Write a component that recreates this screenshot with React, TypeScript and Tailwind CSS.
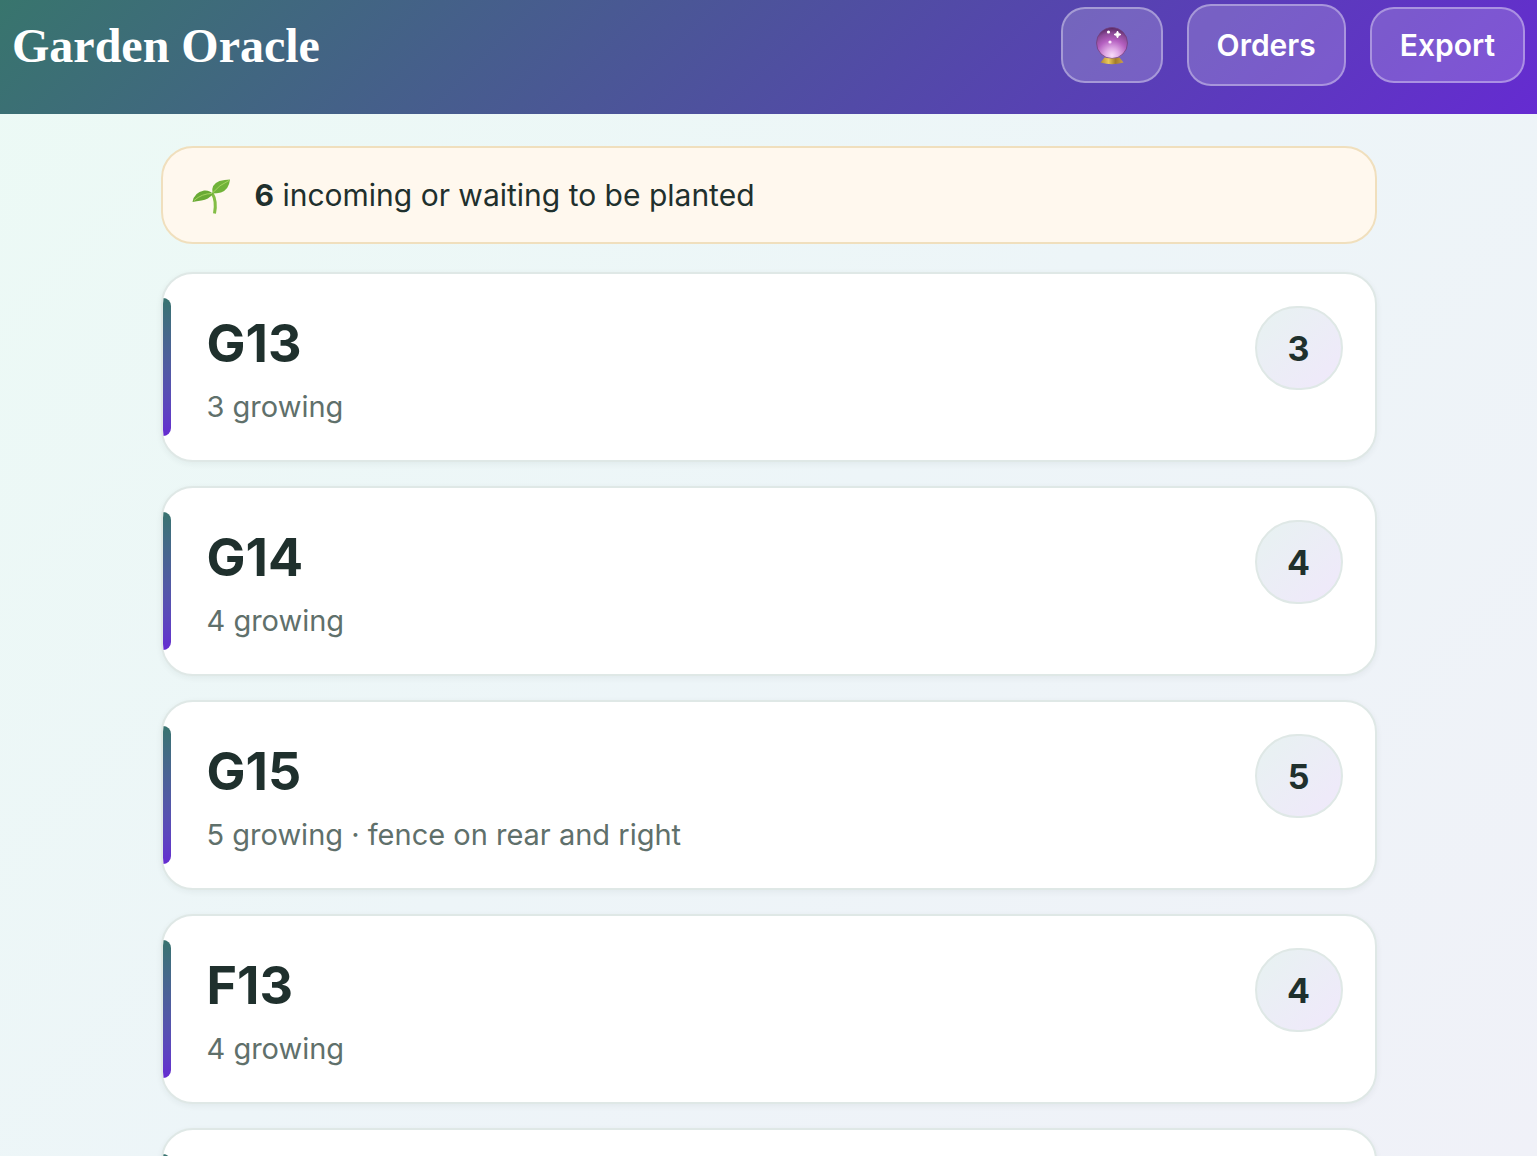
import React from 'react';

interface Bed {
  id: string;
  count: number;
  note?: string;
}

const beds: Bed[] = [
  { id: 'G13', count: 3 },
  { id: 'G14', count: 4 },
  { id: 'G15', count: 5, note: 'fence on rear and right' },
  { id: 'F13', count: 4 },
];

const navButton =
  'flex items-center justify-center rounded-3xl border-2 border-white/35 bg-white/18 text-[30px] leading-9 font-semibold text-white';

const CrystalBall: React.FC = () => (
  <svg viewBox="0 0 40 40" className="size-10" aria-hidden="true">
    <defs>
      <radialGradient id="ball" cx="0.5" cy="0.9" r="0.9">
        <stop offset="0" stopColor="#f8dcf8" />
        <stop offset="0.25" stopColor="#e0aae6" />
        <stop offset="0.55" stopColor="#b45fc0" />
        <stop offset="0.8" stopColor="#8c4a98" />
        <stop offset="1" stopColor="#552560" />
      </radialGradient>
      <linearGradient id="stand" x1="0" x2="1" y1="0" y2="0">
        <stop offset="0" stopColor="#b08a35" />
        <stop offset="0.35" stopColor="#ecc95c" />
        <stop offset="0.65" stopColor="#a37c2a" />
        <stop offset="1" stopColor="#cfa24a" />
      </linearGradient>
    </defs>
    <circle cx="20" cy="18" r="15.5" fill="url(#ball)" stroke="#71407f" strokeWidth="0.8" />
    <path d="M12.500 32.500q7.500 2 15 0l4 5q-11.500 3.500-23 0z" fill="url(#stand)" />
    <circle cx="16.5" cy="7" r="1.6" fill="#fff" />
    <circle cx="18" cy="17" r="1.6" fill="#fbe6fc" />
    <path d="M25.5 6l1 2.500 2.500 1-2.500 1-1 2.500-1-2.500-2.500-1 2.500-1z" fill="#fff" stroke="#fff" strokeWidth="1" />
  </svg>
);

const Seedling: React.FC = () => (
  <svg viewBox="0 0 40 40" className="size-10 shrink-0" aria-hidden="true">
    <path d="M21 18q5 8 2.500 20.500" fill="none" stroke="#83bd45" strokeWidth="3" />
    <path d="M22 19q-3-4-9-3.500Q3 17.500 1.500 27q4-1 9-1.500 7-1 11.500-6.500z" fill="#69aa35" />
    <path d="M21.500 18.500q-2-9 7-12.500 5-1.500 10.500-1.500Q38 14.500 30 17.500q-4 1-8.500 1z" fill="#71b339" />
    <path d="M3 25.500q8-7 18-7M22 17.500Q28 10 38 5.500" fill="none" stroke="#a4d45f" strokeWidth="1" />
  </svg>
);

const BedCard: React.FC<{ bed?: Bed }> = ({ bed }) => (
  <li className="relative flex min-h-[190px] shrink-0 items-start justify-between overflow-hidden rounded-[32px] border-2 border-[#dfe8e6] bg-white py-8 pr-8 pl-11 shadow-[0_2px_6px_rgba(31,48,45,0.06)]">
    {/* Accent stripe on the left edge */}
    <span className="absolute inset-y-6 left-0 w-2 rounded-r-lg bg-linear-to-b from-[#38736f] to-[#652bd1]" />
    {bed && (
      <>
        <div>
          <h2 className="mt-1 text-[52px] leading-[68px] font-bold">{bed.id}</h2>
          <p className="mt-2 text-[29px] leading-[42px] text-[#5f706b]">
            {bed.count} growing{bed.note && ` · ${bed.note}`}
          </p>
        </div>
        <span className="flex h-[84px] w-[88px] items-center justify-center rounded-[44px] border-2 border-[#dfe8e6] bg-[linear-gradient(135deg,#e7f2f1,#f0e8fb)] text-[34px] font-bold">
          {bed.count}
        </span>
      </>
    )}
  </li>
);

const App: React.FC = () => {
  return (
    <div className="flex h-screen flex-col overflow-hidden bg-[linear-gradient(135deg,#ecfaf5,#edf5f8_50%,#f0f1f8)] font-[Inter,sans-serif] text-[#1f302d]">
      <header className="flex shrink-0 items-start justify-between bg-[linear-gradient(135deg,#38756d,#652bd1)] px-3 pt-1 pb-7">
        <h1 className="pt-3 font-['Liberation_Serif',serif] text-[48px] leading-[60px] font-bold text-white">
          Garden Oracle
        </h1>
        <nav className="flex items-center gap-6">
          <button type="button" aria-label="Oracle" className={`${navButton} h-[76px] w-[102px]`}>
            <CrystalBall />
          </button>
          <a href="#orders" className={`${navButton} h-[82px] px-7`}>
            Orders
          </a>
          <button type="button" className={`${navButton} h-[76px] px-7`}>
            Export
          </button>
        </nav>
      </header>

      <main className="mx-auto flex min-h-0 w-full max-w-7xl flex-1 flex-col overflow-hidden px-8 pt-8">
        <div className="flex shrink-0 items-center gap-6 rounded-[32px] border-2 border-[#f0dfbd] bg-[#fff8ee] px-7 py-6 text-[30px] leading-[46px]">
          <Seedling />
          <p>
            <strong className="font-bold">6</strong> incoming or waiting to be planted
          </p>
        </div>

        <ul className="mt-7 flex flex-col gap-6">
          {beds.map((bed) => (
            <BedCard key={bed.id} bed={bed} />
          ))}
          <BedCard />
        </ul>
      </main>
    </div>
  );
};

export default App;
